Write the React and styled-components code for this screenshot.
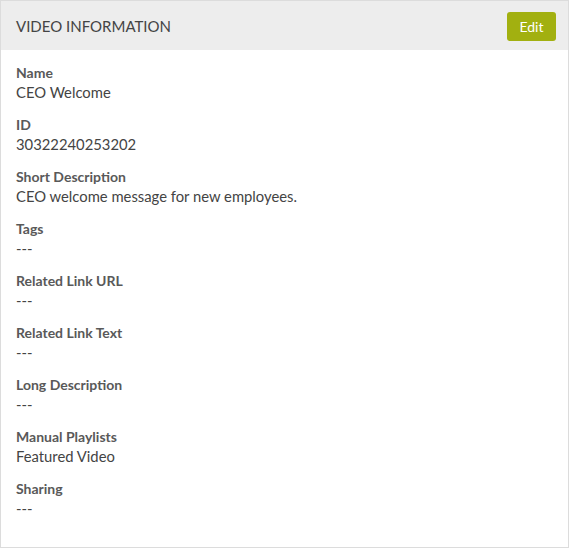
import React from 'react';
import styled, { createGlobalStyle } from 'styled-components';

const GlobalStyle = createGlobalStyle`
  html, body {
    margin: 0;
    padding: 0;
    background: #fff;
  }
  body {
    font-family: Lato, "Open Sans", sans-serif;
  }
`;

const fields = [
  { label: 'Name', value: 'CEO Welcome' },
  { label: 'ID', value: '30322240253202' },
  { label: 'Short Description', value: 'CEO welcome message for new employees.' },
  { label: 'Tags', value: '---' },
  { label: 'Related Link URL', value: '---' },
  { label: 'Related Link Text', value: '---' },
  { label: 'Long Description', value: '---' },
  { label: 'Manual Playlists', value: 'Featured Video' },
  { label: 'Sharing', value: '---' },
];

function App() {
  return (
    <>
      <GlobalStyle />
      <Panel>
        <Header>
          <Title>VIDEO INFORMATION</Title>
          <EditButton type="button">Edit</EditButton>
        </Header>
        <Body>
          {fields.map((f) => (
            <Field key={f.label}>
              <Label>{f.label}</Label>
              <Value>{f.value}</Value>
            </Field>
          ))}
        </Body>
      </Panel>
    </>
  );
}

const Panel = styled.div`
  box-sizing: border-box;
  width: 569px;
  height: 548px;
  border: 1px solid #dcdcdc;
  background: #fff;
  display: flex;
  flex-direction: column;
`;

const Header = styled.div`
  height: 49px;
  background: #ededed;
  display: flex;
  align-items: center;
  justify-content: space-between;
  padding: 0 12px 0 15px;
`;

const Title = styled.h2`
  margin: 0;
  font-size: 15px;
  font-weight: 400;
  color: #444;
`;

const EditButton = styled.button`
  width: 49px;
  height: 29px;
  margin-top: 1px;
  border: none;
  border-radius: 3px;
  background: #a2b010;
  color: #fff;
  font-family: Lato, "Open Sans", sans-serif;
  font-size: 14px;
  padding: 0;
  cursor: pointer;
`;

const Body = styled.div`
  padding: 13px 15px;
  display: flex;
  flex-direction: column;
  gap: 13px;
`;

const Field = styled.div`
  display: flex;
  flex-direction: column;
`;

const Label = styled.div`
  font-size: 14px;
  line-height: 19px;
  font-weight: 700;
  color: #595959;
`;

const Value = styled.div`
  font-size: 14.8px;
  line-height: 20px;
  color: #444;
`;

export default App;
